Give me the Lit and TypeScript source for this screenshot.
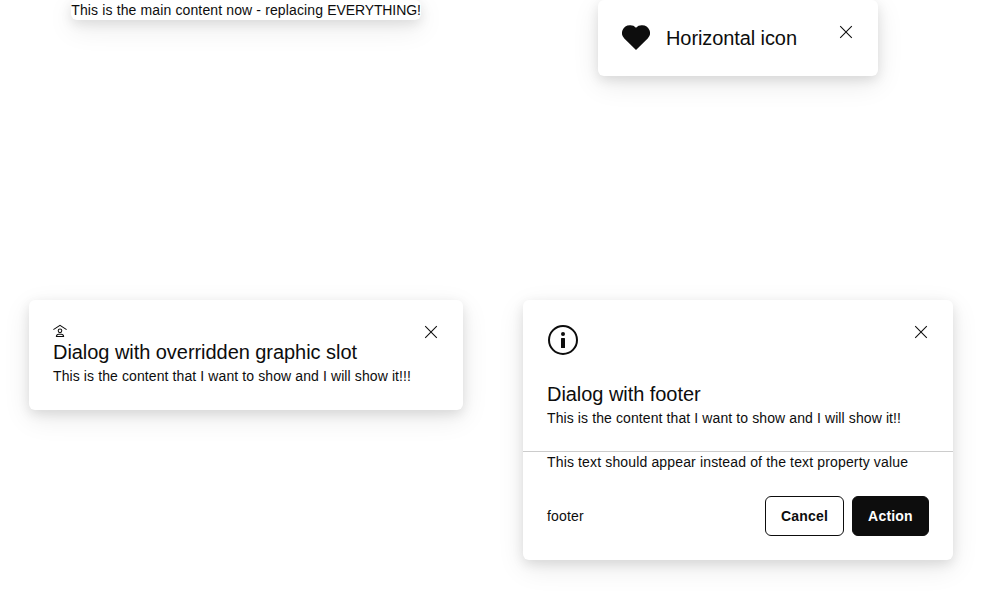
import { LitElement, html, css, nothing } from "lit";
import { customElement, property } from "lit/decorators.js";

const icons = {
  close: html`<svg viewBox="0 0 20 20"><path d="M4.200 4.200 15.800 15.800M15.800 4.200 4.200 15.800" fill="none" stroke="currentColor" stroke-width="1.05"/></svg>`,
  heart: html`<svg viewBox="0 0 28 28"><path d="M14 3.700A7.800 7.800 0 0 1 20.200 1.300A7.800 7.800 0 0 1 25.700 14.600L14 26.100L2.300 14.600A7.800 7.800 0 0 1 7.800 1.300A7.800 7.800 0 0 1 14 3.700Z" fill="currentColor"/></svg>`,
  home: html`<svg viewBox="0 0 14 14"><g fill="none" stroke="currentColor" stroke-width="1.050"><path d="M.4 5.600 7 1.300l6.600 4.300"/><circle cx="7" cy="6.800" r="1.800"/><path d="M3.400 12.500h7.200C10.500 11 9.600 10.300 8.300 10.300H5.700C4.400 10.300 3.500 11 3.400 12.500Z"/></g></svg>`,
  info: html`<svg viewBox="0 0 32 32"><circle cx="16" cy="16" r="14" fill="none" stroke="currentColor" stroke-width="2"/><circle cx="16" cy="10" r="2" fill="currentColor"/><rect x="14" y="14" width="4" height="10" rx=".5" fill="currentColor"/></svg>`,
};

@customElement("demo-dialog")
class DemoDialog extends LitElement {
  @property() icon = "";
  @property() heading = "";
  @property() subtitle = "";
  @property({ type: Boolean, reflect: true }) bare = false;
  @property({ type: Boolean, reflect: true }) inline = false;
  @property({ type: Boolean, reflect: true }) stacked = false;

  static styles = css`
    :host {
      display: block;
      position: relative;
      box-sizing: border-box;
      min-width: 280px;
      border-radius: 6px;
      background: #fff;
      box-shadow: 0 4px 12px rgba(0, 0, 0, 0.1), 0 8px 28px rgba(0, 0, 0, 0.09);
    }
    :host([bare]) { letter-spacing: 0.13px; }
    svg { display: block; width: 100%; height: 100%; }
    .header { display: flex; flex-direction: column; padding: 24px 52px 24px 24px; }
    :host([inline]) .header { flex-direction: row; gap: 16px; }
    :host([stacked]) .header { border-bottom: 1px solid #ccc; padding-bottom: 23px; }
    .graphic { flex: none; width: 14px; height: 14px; }
    :host([inline]) .graphic { width: 28px; height: 28px; }
    :host([stacked]) .graphic { width: 32px; height: 32px; margin-bottom: 24px; }
    .heading { font-size: 20px; line-height: 28px; letter-spacing: -0.05px; white-space: nowrap; }
    :host([inline]) .heading { letter-spacing: -0.09px; }
    .subtitle { letter-spacing: 0.104px; white-space: nowrap; }
    .close {
      position: absolute;
      top: 22px;
      right: 22px;
      width: 20px;
      height: 20px;
      padding: 0;
      border: 0;
      background: none;
      color: inherit;
    }
  `;

  render() {
    if (this.bare) return html`<slot></slot>`;
    return html`
      <div class="header">
        <div class="graphic">${icons[this.icon as keyof typeof icons]}</div>
        <div class="heading">${this.heading}</div>
        ${this.subtitle ? html`<div class="subtitle">${this.subtitle}</div>` : nothing}
      </div>
      <slot></slot>
      <button class="close" aria-label="Close">${icons.close}</button>
    `;
  }
}

@customElement("app-root")
class AppRoot extends LitElement {
  static styles = css`
    :host {
      display: grid;
      grid-template-columns: 492px 492px;
      grid-template-rows: 300px 300px;
      height: 600px;
      overflow: hidden;
      justify-items: center;
      align-items: start;
      background: #fff;
      color: #0d0d0d;
      font: 14px/20px "Liberation Sans", Arial, sans-serif;
    }
    .caps { letter-spacing: -0.1px; }
    .wide { width: 434px; }
    .footed { width: 430px; }
    .body { padding: 0 24px; letter-spacing: 0.147px; }
    .footer { display: flex; align-items: center; gap: 8px; padding: 24px; letter-spacing: 0.15px; }
    .label { flex: 1; }
    .button {
      box-sizing: border-box;
      width: 79px;
      height: 40px;
      padding: 0;
      border: 1px solid #0d0d0d;
      border-radius: 6px;
      background: #fff;
      color: #0d0d0d;
      font: bold 14px/20px "Liberation Sans", Arial, sans-serif;
      letter-spacing: 0.2px;
    }
    .filled { width: 77px; background: #0d0d0d; color: #fff; }
  `;

  render() {
    return html`
      <demo-dialog bare>This is the main content now - replacing <span class="caps">EVERYTHING!</span></demo-dialog>
      <demo-dialog inline icon="heart" heading="Horizontal icon"></demo-dialog>
      <demo-dialog class="wide" icon="home" heading="Dialog with overridden graphic slot"
        subtitle="This is the content that I want to show and I will show it!!!"></demo-dialog>
      <demo-dialog class="footed" stacked icon="info" heading="Dialog with footer"
        subtitle="This is the content that I want to show and I will show it!!">
        <div class="body">This text should appear instead of the text property value</div>
        <div class="footer">
          <span class="label">footer</span>
          <button class="button">Cancel</button>
          <button class="button filled">Action</button>
        </div>
      </demo-dialog>
    `;
  }
}
